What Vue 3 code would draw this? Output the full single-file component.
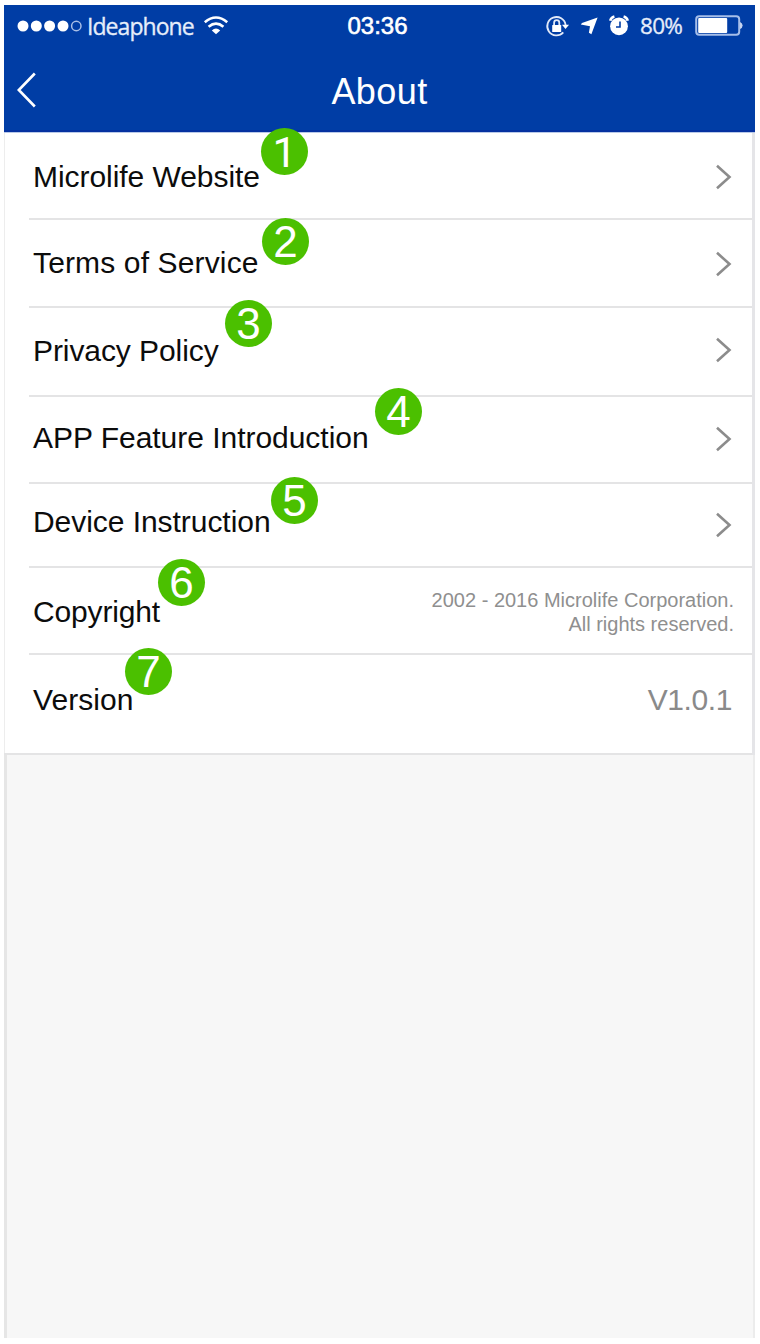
<script setup>
const rows = [
  { label: 'Microlife Website', height: 88, pad: 27, track: -0.05, chevron: 45, badge: [257, -4] },
  { label: 'Terms of Service', height: 88, pad: 25, track: 0.14, chevron: 44, badge: [258, -2] },
  { label: 'Privacy Policy', height: 89, pad: 25, track: -0.08, chevron: 42, badge: [221, -8] },
  { label: 'APP Feature Introduction', height: 87, pad: 23, track: -0.03, chevron: 42, badge: [371, -9] },
  { label: 'Device Instruction', height: 84, pad: 20, track: -0.05, chevron: 41, badge: [267, -7] },
  { label: 'Copyright', height: 87, pad: 26, track: -0.15, note: ['2002 - 2016 Microlife Corporation.', 'All rights reserved.'], badge: [154, -9] },
  { label: 'Version', height: 100, pad: 27, track: 0.05, value: 'V1.0.1', badge: [121, -7] },
]
</script>

<template>
  <main class="screen">
    <header class="header">
      <div class="status">
        <div class="side left">
          <svg class="dots" width="66" height="14" viewBox="0 0 66 14">
            <circle cx="6" cy="7" r="5.5" /><circle cx="19.3" cy="7" r="5.5" />
            <circle cx="32.6" cy="7" r="5.5" /><circle cx="46" cy="7" r="5.5" />
            <circle class="ring" cx="59.3" cy="7" r="4.7" />
          </svg>
          <span class="carrier">Ideaphone</span>
          <svg class="wifi" width="26" height="20" viewBox="0 0 26 20">
            <path class="arc" d="M1.8 7.2Q13-2.2 24.2 7.2" />
            <path class="arc" d="M5.6 11.8Q13 5.6 20.4 11.8" />
            <path d="M8.8 15.4Q13 11.6 17.2 15.4L13 19.2Z" />
          </svg>
        </div>
        <span class="time">03:36</span>
        <div class="side right">
          <svg class="lock" width="24" height="24" viewBox="0 0 24 24">
            <path class="line" d="M18.3 18.4A9.2 9.2 0 1 1 20.6 11" />
            <path d="M17 10.8H24L20.5 15Z" />
            <rect x="7.2" y="11" width="9" height="7" rx=".6" />
            <path class="line" d="M9.1 11V8.8a2.6 2.6 0 0 1 5.2 0V11" />
          </svg>
          <svg class="arrow" width="18" height="18" viewBox="0 0 18 18">
            <path d="M17.6 .5L11.4 17.3L8.9 15.8L10 9.3L.8 7.6L2 6Z" />
          </svg>
          <svg class="alarm" width="22" height="22" viewBox="0 0 22 22">
            <circle cx="11" cy="12.3" r="8.9" />
            <path class="bell" d="M2.3 6.8Q2.8 3.4 6.4 2.5M19.7 6.8Q19.2 3.4 15.6 2.5" />
            <path class="hand" d="M12 7.6V13H8" />
          </svg>
          <span class="percent">80%</span>
          <svg class="battery" width="48" height="22" viewBox="0 0 48 22">
            <rect class="case" x="1.2" y="1.2" width="43" height="18.6" rx="3" />
            <rect x="3.2" y="3" width="29" height="15" rx="1" />
            <path class="cap" d="M45 7q2.6 1 2.6 3.5T45 14Z" />
          </svg>
        </div>
      </div>
      <div class="nav">
        <svg class="back" width="20" height="36" viewBox="0 0 20 36">
          <path d="M17.8 1.5L1.8 18L17.8 34.5" />
        </svg>
        <h1 class="title">About</h1>
      </div>
    </header>

    <section class="list">
      <div v-for="(row, i) in rows" :key="row.label" class="row" :style="{ height: row.height + 'px' }">
        <div class="content">
          <span class="label" :style="{ marginTop: row.pad + 'px', letterSpacing: row.track + 'px' }">{{ row.label }}</span>
          <svg v-if="row.chevron" class="chevron" :style="{ marginTop: row.chevron - 13 + 'px' }" width="17" height="26" viewBox="0 0 17 26">
            <path d="M2 1.8L14.5 13L2 24.2" />
          </svg>
          <p v-if="row.note" class="note"><span v-for="t in row.note" :key="t">{{ t }}</span></p>
          <span v-if="row.value" class="value">{{ row.value }}</span>
        </div>
        <span class="badge" :class="{ first: i === 0 }" :style="{ left: row.badge[0] + 'px', top: row.badge[1] + 'px' }">{{ i + 1 }}</span>
      </div>
    </section>
    <div class="blank"></div>
  </main>
</template>

<style>
body { margin: 0; background: #fff; }
</style>

<style scoped>
.screen {
  box-sizing: border-box;
  width: 760px;
  height: 1344px;
  padding: 5px 5px 6px 4px;
  display: flex;
  flex-direction: column;
  font-family: "Liberation Sans", Arial, sans-serif;
  overflow: hidden;
}
.header {
  box-sizing: border-box;
  position: relative;
  height: 127px;
  flex: none;
  background: #003da5;
  border-bottom: 2px solid #0531a0;
  box-shadow: 0 1px 0 #b9c8e8;
  color: #fff;
}
.status {
  height: 42px;
  display: grid;
  grid-template-columns: 1fr auto 1fr;
  align-items: center;
}
.side { display: flex; align-items: center; }
.right { justify-content: flex-end; padding-right: 12px; }
.left { padding-left: 13px; }
svg { display: block; flex: none; fill: #fff; }
.ring { fill: none; stroke: #a9bfe6; stroke-width: 1.5; }
.carrier {
  margin-left: 4px;
  font: 23px/30px "Open Sans", sans-serif;
  letter-spacing: -0.95px;
  color: #e6edfa;
  -webkit-text-stroke: 0.3px #e6edfa;
}
.wifi { margin: -2px 0 0 9px; }
.arc { fill: none; stroke: #fff; stroke-width: 2.6; }
.time {
  margin: 0 4px 0 0;
  font-size: 24px;
  line-height: 30px;
  -webkit-text-stroke: 0.6px #fff;
}
.line { fill: none; stroke: #e1e9f8; stroke-width: 1.8; }
.arrow { margin-left: 11px; }
.alarm { margin: -3px 0 0 10px; }
.bell { fill: none; stroke: #fff; stroke-width: 2.6; }
.hand { fill: none; stroke: #003da5; stroke-width: 1.6; }
.percent {
  margin-left: 10px;
  font: 22.5px/30px "Open Sans", sans-serif;
  letter-spacing: -0.8px;
  color: #e6edfa;
  -webkit-text-stroke: 0.3px #e6edfa;
}
.battery { margin-left: 13px; }
.case { fill: none; stroke: #a6bee9; stroke-width: 2; }
.cap { fill: #c5d4f0; }
.nav {
  height: 83px;
  padding: 0 13px;
  display: grid;
  grid-template-columns: 20px 1fr 20px;
}
.back { margin-top: 25px; fill: none; stroke: #fff; stroke-width: 2.6; }
.title {
  margin: 24px 0 0;
  text-align: center;
  font-size: 36px;
  font-weight: 400;
  line-height: 42px;
  letter-spacing: 0.4px;
}
.list {
  box-sizing: border-box;
  height: 623px;
  flex: none;
  border-left: 1px solid #ededed;
  border-right: 3px solid #e5e5e8;
}
.row {
  box-sizing: border-box;
  position: relative;
  margin-left: -1px;
  padding-left: 25px;
}
.content {
  box-sizing: border-box;
  height: 100%;
  padding: 0 18px 0 4px;
  display: flex;
  justify-content: space-between;
  align-items: flex-start;
  border-bottom: 2px solid #e4e4e5;
}
.row:last-child { padding-left: 0; }
.row:last-child .content { padding-left: 29px; }
.label {
  font-size: 30px;
  line-height: 36px;
  color: #0c0c0c;
  white-space: nowrap;
}
.chevron { fill: none; stroke: #8c8c8c; stroke-width: 2.6; margin-right: 2px; }
.note {
  margin: 20px 0 0;
  display: flex;
  flex-direction: column;
  align-items: flex-end;
  font-size: 20px;
  line-height: 24px;
  color: #8f8f8f;
}
.value {
  margin: 27px 2px 0 0;
  font-size: 30px;
  line-height: 36px;
  letter-spacing: -0.4px;
  color: #8a8a8a;
}
.badge {
  position: absolute;
  width: 47px;
  height: 47px;
  border-radius: 50%;
  background: #4bc000;
  color: #fff;
  font-size: 44px;
  line-height: 48px;
  text-align: center;
}
.first { font-family: Roboto, sans-serif; font-size: 43px; line-height: 49px; }
.blank {
  box-sizing: border-box;
  flex: 1;
  background: #f7f7f7;
  border-left: 3px solid #e6e6e6;
  border-right: 2px solid #ececec;
}
</style>
